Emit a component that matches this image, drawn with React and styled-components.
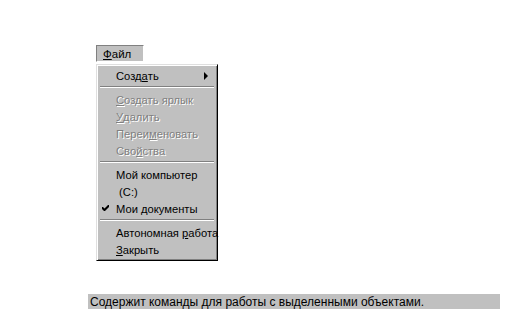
import React from "react";
import styled, { createGlobalStyle, css } from "styled-components";

const Global = createGlobalStyle`
  html, body { margin: 0; padding: 0; background: #ffffff; overflow: hidden; }
  body { font-family: "Liberation Sans", Arial, sans-serif; font-size: 11px; color: #000; }
`;

const Page = styled.div`
  width: 523px;
  height: 310px;
  display: flex;
  flex-direction: column;
  padding: 45px 0 0 88px;
  box-sizing: border-box;
`;

const MenuArea = styled.div`
  display: flex;
  flex-direction: column;
  align-items: flex-start;
  padding-left: 8px;
`;

const MenuBarButton = styled.div`
  width: 48px;
  height: 17px;
  box-sizing: border-box;
  background: #c0c0c0;
  border-top: 1px solid #808080;
  border-left: 1px solid #808080;
  border-bottom: 1px solid #ffffff;
  border-right: 1px solid #ffffff;
  display: flex;
  align-items: center;
  padding-left: 6px;
  font-size: 11.5px;
`;

const Menu = styled.div`
  margin-top: 2px;
  width: 122px;
  box-sizing: border-box;
  background: #c0c0c0;
  border: 1px solid;
  border-color: #dfdfdf #000000 #000000 #dfdfdf;
  box-shadow: inset 1px 1px 0 #ffffff, inset -1px -1px 0 #808080;
  padding: 2px;
  display: flex;
  flex-direction: column;
`;

const Item = styled.div`
  position: relative;
  height: 17px;
  display: flex;
  align-items: center;
  padding-left: 17px;
  white-space: pre;
  font-size: 11.2px;
  ${(p) =>
    p.disabled &&
    css`
      color: #808080;
      text-shadow: 1px 1px 0 #ffffff;
    `}
`;

const Check = styled.span`
  position: absolute;
  left: 3px;
  top: 5px;
  display: flex;
`;

const Arrow = styled.span`
  position: absolute;
  right: 7px;
  top: 5px;
  width: 0;
  height: 0;
  border-top: 4px solid transparent;
  border-bottom: 4px solid transparent;
  border-left: 4px solid #000;
`;

const Separator = styled.div`
  margin: 2px 1px 3px;
  height: 0;
  border-top: 1px solid #808080;
  border-bottom: 1px solid #ffffff;
`;

const U = styled.span`
  text-decoration: underline;
`;

const StatusBar = styled.div`
  margin-top: 33px;
  width: 412px;
  height: 15px;
  background: #c0c0c0;
  display: flex;
  align-items: center;
  padding-left: 2px;
  box-sizing: border-box;
  font-size: 12px;
  white-space: nowrap;
`;

export default function App() {
  return (
    <>
      <Global />
      <Page>
        <MenuArea>
          <MenuBarButton>
            <U>Ф</U>айл
          </MenuBarButton>
          <Menu>
            <Item>
              Созд<U>а</U>ть
              <Arrow />
            </Item>
            <Separator />
            <Item disabled>
              <U>С</U>оздать ярлык
            </Item>
            <Item disabled>
              <U>У</U>далить
            </Item>
            <Item disabled>
              Переи<U>м</U>еновать
            </Item>
            <Item disabled>
              Сво<U>й</U>ства
            </Item>
            <Separator />
            <Item>Мой компьютер</Item>
            <Item>{" (C:)"}</Item>
            <Item>
              <Check>
                <svg width="7" height="7" viewBox="0 0 7 7">
                  <path d="M0 2 L0 4 L2 6 L3 6 L7 2 L7 0 L6 0 L2.5 3.5 L1 2 Z" fill="#000" />
                </svg>
              </Check>
              Мои документы
            </Item>
            <Separator />
            <Item>
              {"Автономная "}
              <U>р</U>абота
            </Item>
            <Item>
              <U>З</U>акрыть
            </Item>
          </Menu>
        </MenuArea>
        <StatusBar>Содержит команды для работы с выделенными объектами.</StatusBar>
      </Page>
    </>
  );
}
